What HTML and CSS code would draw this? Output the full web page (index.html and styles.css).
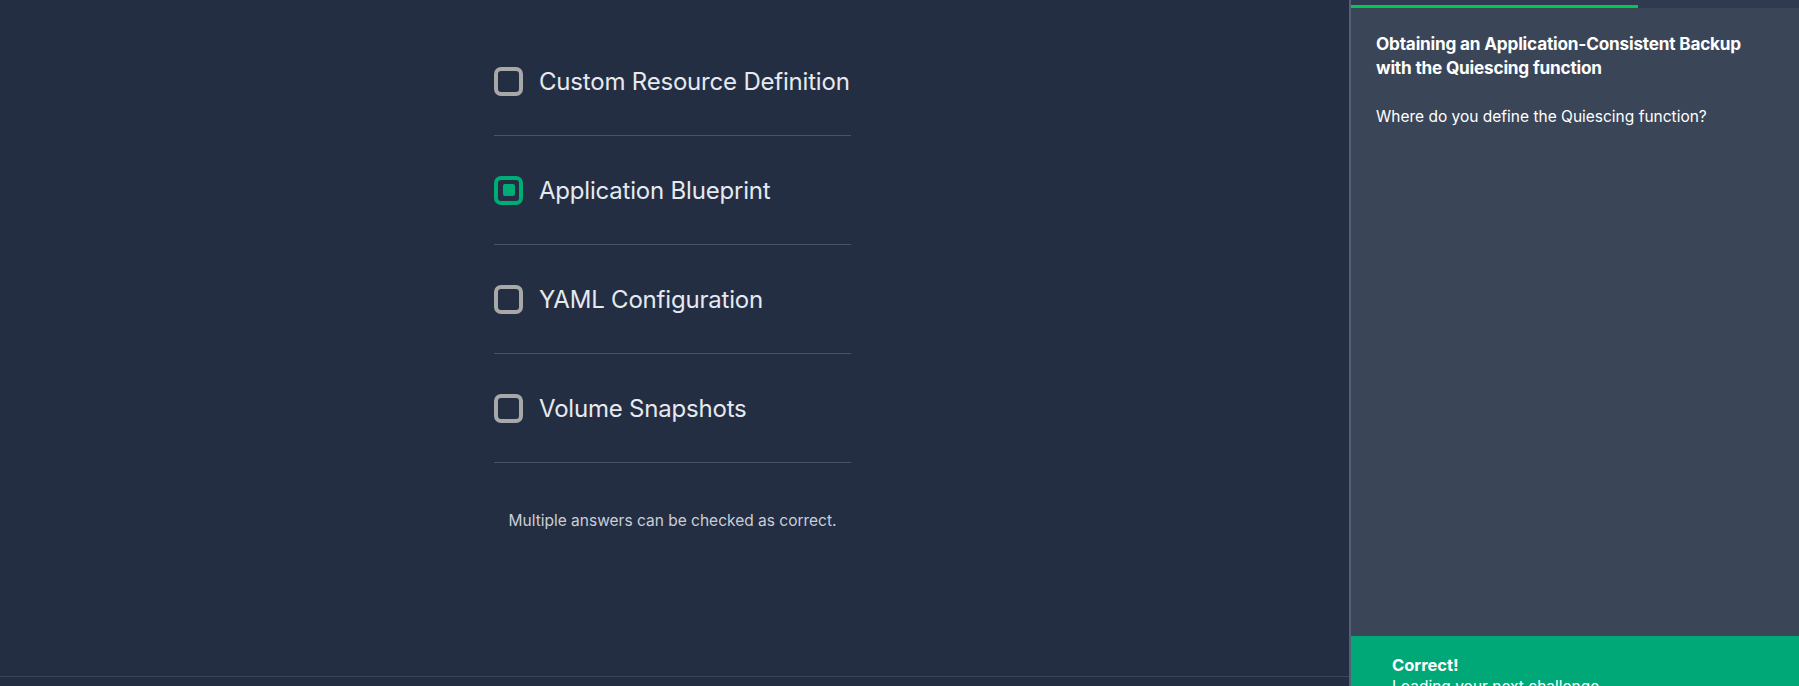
FILE: index.html
```html
<!DOCTYPE html>
<html lang="en">
<head>
<meta charset="utf-8">
<title>Quiz</title>
<link rel="stylesheet" href="styles.css">
</head>
<body>
<div class="app">
  <main class="main">
    <div class="quiz">
      <ul class="answers">
        <li class="answer"><span class="box"></span><span class="label">Custom Resource Definition</span></li>
        <li class="answer checked"><span class="box"><span class="dot"></span></span><span class="label">Application Blueprint</span></li>
        <li class="answer"><span class="box"></span><span class="label">YAML Configuration</span></li>
        <li class="answer"><span class="box"></span><span class="label">Volume Snapshots</span></li>
      </ul>
      <p class="hint">Multiple answers can be checked as correct.</p>
    </div>
    <div class="main-footer"></div>
  </main>
  <aside class="side">
    <div class="progress"><div class="progress-fill" style="width:287px"></div></div>
    <div class="side-body">
      <h2 class="title">Obtaining an Application-Consistent Backup with the Quiescing function</h2>
      <p class="question">Where do you define the Quiescing function?</p>
    </div>
    <div class="feedback">
      <div class="fb-title">Correct!</div>
      <div class="fb-text">Loading your next challenge...</div>
    </div>
  </aside>
</div>
</body>
</html>
```

FILE: styles.css
```css
html, body {
  margin: 0;
  padding: 0;
  height: 686px;
  overflow: hidden;
}
body {
  font-family: Inter, "Open Sans", "Liberation Sans", sans-serif;
  background: #242e42;
}
.app {
  display: flex;
  height: 686px;
  overflow: hidden;
}
.main {
  flex: 1;
  display: flex;
  flex-direction: column;
  background: #242e42;
}
.quiz {
  flex: 1;
  display: flex;
  flex-direction: column;
  align-items: center;
  padding-top: 27px;
  padding-right: 4px;
}
.answers {
  list-style: none;
  margin: 0;
  padding: 0;
  width: 357px;
}
.answer {
  display: flex;
  align-items: center;
  height: 108px;
  border-bottom: 1px solid #4a5366;
}
.box {
  box-sizing: border-box;
  width: 29px;
  height: 29px;
  border: 4px solid #a8a8a8;
  border-radius: 7px;
  display: flex;
  align-items: center;
  justify-content: center;
  flex: none;
}
.checked .box {
  border-color: #00ac76;
}
.dot {
  width: 12px;
  height: 12px;
  background: #00ac76;
  border-radius: 2px;
}
.label {
  margin-left: 16px;
  color: #e6e9f0;
  font-size: 24px;
  letter-spacing: -0.2px;
}
.hint {
  margin: 47px 0 0;
  font-size: 15.5px;
  color: #c9ced8;
  line-height: 22px;
}
.main-footer {
  height: 9px;
  border-top: 1px solid #3b4558;
}
.side {
  width: 448px;
  flex: none;
  border-left: 2px solid #566074;
  background: #3b4558;
  display: flex;
  flex-direction: column;
}
.progress {
  height: 8px;
  flex: none;
  background: #2f3a51;
  position: relative;
}
.progress-fill {
  position: absolute;
  left: 0;
  bottom: 0;
  height: 3px;
  background: #00c853;
}
.side-body {
  flex: 1;
  padding: 24px 30px 0 25px;
}
.title {
  margin: 0;
  font-size: 17.2px;
  line-height: 24px;
  font-weight: 700;
  color: #ffffff;
  letter-spacing: -0.2px;
}
.question {
  margin: 26px 0 0;
  font-size: 15.5px;
  line-height: 22px;
  color: #ffffff;
}
.feedback {
  flex: none;
  box-sizing: border-box;
  height: 50px;
  overflow: hidden;
  background: #00a878;
  padding: 18px 0 0 41px;
  color: #ffffff;
}
.fb-title {
  font-weight: 700;
  font-size: 16.5px;
  line-height: 22px;
}
.fb-text {
  font-size: 15.5px;
  line-height: 22px;
}
```
